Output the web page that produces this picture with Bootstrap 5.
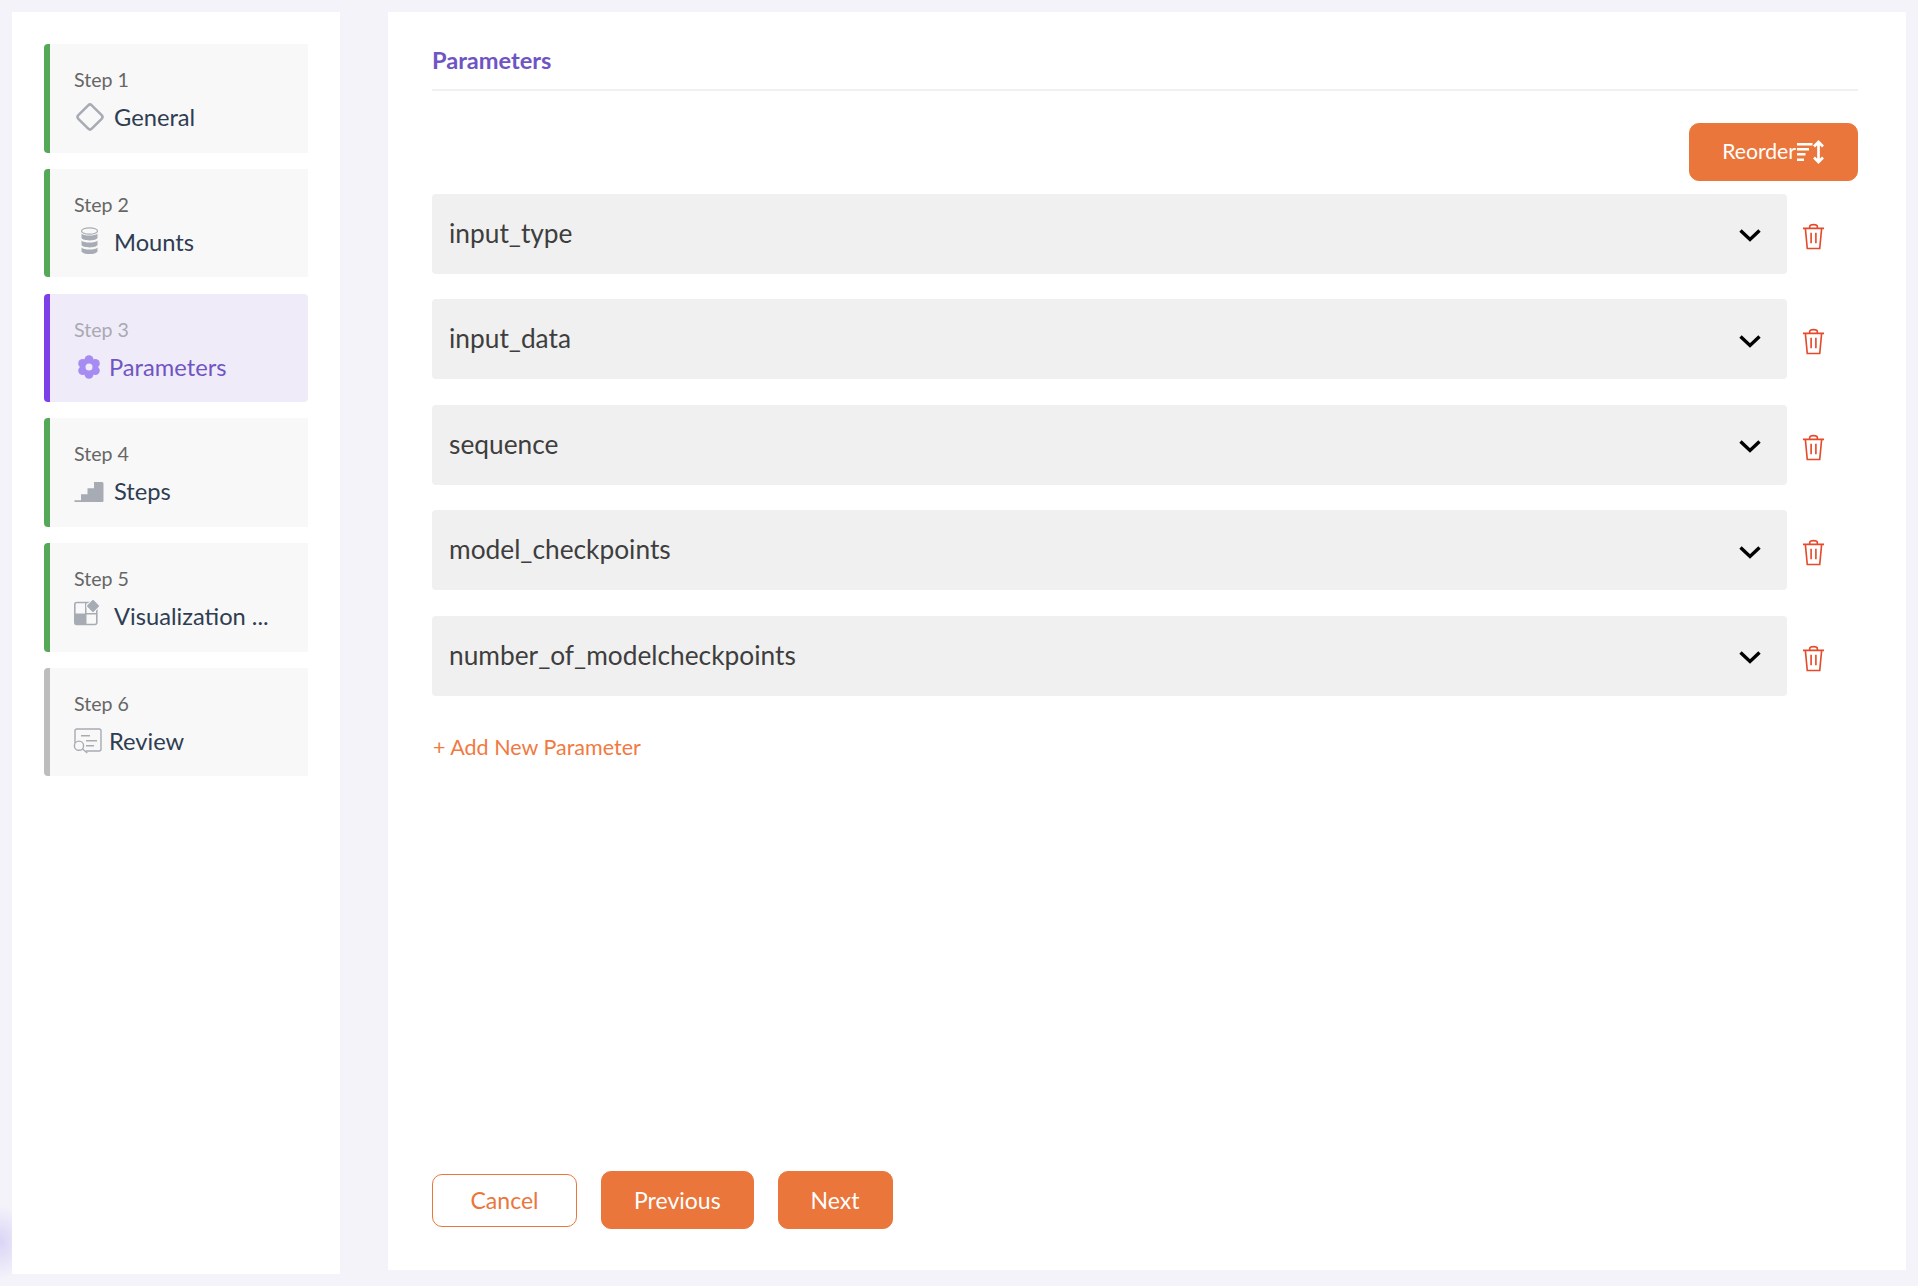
<!doctype html>
<html lang="en">
<head>
<meta charset="utf-8">
<title>Parameters</title>
<link href="https://cdn.jsdelivr.net/npm/bootstrap@5.3.0/dist/css/bootstrap.min.css" rel="stylesheet">
<style>
html,body{height:100%}
body{background:#f4f3fa;font-family:"Lato","Noto Sans",sans-serif;overflow:hidden;padding:12px;position:relative}
.shell{height:1262px;gap:48px;position:relative;z-index:1}
.side-panel{width:328px;background:#fff;padding:32px;flex:none;gap:16.3px}
.step-box{height:108.5px;flex:none;background:#f8f8f8;border-left:6px solid #55a858;border-radius:4px 0 0 4px;padding:21px 0 0 24px}
.step-box.is-active{background:#efebf8;border-left-color:#7c3fe8;border-radius:4px}
.step-box.is-pending{border-left-color:#bdbdbd}
.step-num{font-size:19.6px;line-height:30px;color:#666}
.is-active .step-num{color:#a9a9b3}
.step-name{font-size:23.7px;line-height:34px;color:#2f3d52;margin-top:5px}
.is-active .step-name{color:#6f55c3}
.step-ico{width:30px;height:30px;flex:none;display:block;overflow:visible}
.name-wide{gap:10px}
.name-tight{gap:5px}
.main-panel{width:1518px;height:1258px;background:#fff;padding:32px 48px 41px 44px}
.panel-title{font-size:23.6px;font-weight:700;color:#6f55c3;line-height:32px;border-bottom:2px solid #f0f0f0;height:47px}
.act-btn{--bs-btn-color:#fff;--bs-btn-bg:#ea763b;--bs-btn-border-color:#ea763b;--bs-btn-hover-bg:#ea763b;--bs-btn-hover-color:#fff;--bs-btn-hover-border-color:#ea763b;--bs-btn-border-radius:10px;font-size:23px;height:58px;padding:0 32px;display:inline-flex;align-items:center}
.act-btn.reorder-btn{font-size:21.2px;padding:0 32px}
.reorder-btn svg{margin-left:1px}
.ghost-btn{--bs-btn-color:#ea763b;--bs-btn-bg:#fff;--bs-btn-border-color:#ea763b;--bs-btn-hover-bg:#fff;--bs-btn-hover-color:#ea763b;--bs-btn-hover-border-color:#ea763b;--bs-btn-border-radius:10px;font-size:23px;height:53px;width:145px;display:inline-flex;align-items:center;justify-content:center}
.reorder-wrap{margin-top:32px;height:58px;margin-bottom:12.5px}
.param-row{height:80px;margin-bottom:25.5px}
.param-head{width:1355px;height:80px;background:#f0f0f0;border-radius:4px;padding:0 26px 0 17px;font-size:26.3px;color:#3e3e3e}
.chev-ico{margin-top:3px}
.trash-ico{margin-left:15px;margin-top:5px}
.add-link{font-size:21.5px;color:#f07a42;text-decoration:none;line-height:30px}
.add-wrap{margin-top:10.5px;padding-left:1px}
.foot-actions{gap:24px}
.glow-spot{position:absolute;left:-30px;top:1205px;width:60px;height:74px;pointer-events:none;background:radial-gradient(closest-side,rgba(180,165,240,.4),rgba(180,165,240,0))}
</style>
</head>
<body>
<div class="glow-spot"></div>
<div class="shell d-flex align-items-start">
  <aside class="side-panel d-flex flex-column h-100">
    <div class="step-box">
      <div class="step-num">Step 1</div>
      <div class="step-name d-flex align-items-center name-wide">
        <svg class="step-ico" viewBox="0 0 30 30"><rect x="6.500" y="5.500" width="19" height="19" rx="2.500" transform="rotate(45 16 15)" fill="none" stroke="#a7abb3" stroke-width="2.500"/></svg>
        <span>General</span>
      </div>
    </div>
    <div class="step-box">
      <div class="step-num">Step 2</div>
      <div class="step-name d-flex align-items-center name-wide">
        <svg class="step-ico" viewBox="0 0 30 30"><ellipse cx="15.500" cy="4" rx="8" ry="3.200" fill="#f8f8f8" stroke="#a7abb3" stroke-width="1.200"/><path d="M7.500 6.500c2 2.800 14 2.800 16 0V11c-1.500 3.200-14.500 3.200-16 0zM7.500 13.500c2 2.800 14 2.800 16 0V18c-1.500 3.200-14.500 3.200-16 0zM7.500 20.500c2 2.800 14 2.800 16 0V24.500c-1.500 3.400-14.500 3.400-16 0z" fill="#a7abb3"/></svg>
        <span>Mounts</span>
      </div>
    </div>
    <div class="step-box is-active">
      <div class="step-num">Step 3</div>
      <div class="step-name d-flex align-items-center name-tight">
        <svg class="step-ico" viewBox="0 0 30 30"><g fill="#a68cf2"><circle cx="15" cy="7.800" r="4.500"/><circle cx="15" cy="22.200" r="4.500"/><circle cx="8.700" cy="11.400" r="4.500"/><circle cx="21.300" cy="11.400" r="4.500"/><circle cx="8.700" cy="18.600" r="4.500"/><circle cx="21.300" cy="18.600" r="4.500"/><circle cx="15" cy="15" r="7"/></g><circle cx="15" cy="15" r="3.500" fill="#efebf8"/></svg>
        <span>Parameters</span>
      </div>
    </div>
    <div class="step-box">
      <div class="step-num">Step 4</div>
      <div class="step-name d-flex align-items-center name-wide">
        <svg class="step-ico" viewBox="0 0 30 30"><path d="M.5 26v-1.700H7v-6h6.500v-6H20V6h8a1.500 1.500 0 0 1 1.500 1.500V25a1 1 0 0 1-1 1z" fill="#a7abb3"/></svg>
        <span>Steps</span>
      </div>
    </div>
    <div class="step-box">
      <div class="step-num">Step 5</div>
      <div class="step-name d-flex align-items-center name-wide">
        <svg class="step-ico" viewBox="0 0 30 30"><rect x=".8" y="1.500" width="22" height="22" rx="2" fill="#f8f8f8" stroke="#a7abb3" stroke-width="1.600"/><path d="M1 12.500h10.500V24H3a2 2 0 0 1-2-2zM11 1.500h1.500V24H11zM11 12h12v1.500H11z" fill="#a7abb3"/><rect x="14" y="0" width="10" height="10" rx="1.500" transform="rotate(45 19 5)" fill="#a7abb3" stroke="#f8f8f8" stroke-width="1"/></svg>
        <span>Visualization ...</span>
      </div>
    </div>
    <div class="step-box is-pending">
      <div class="step-num">Step 6</div>
      <div class="step-name d-flex align-items-center name-tight">
        <svg class="step-ico" viewBox="0 0 30 30"><path d="M1 17V5a2 2 0 0 1 2-2h22a2 2 0 0 1 2 2v18a2 2 0 0 1-2 2H12" fill="none" stroke="#a7abb3" stroke-width="1.400"/><path d="M7 9.700h9M12 14.700h11M12 19.700h8" stroke="#a7abb3" stroke-width="1.400" fill="none"/><circle cx="5" cy="19.700" r="4.600" fill="#f8f8f8" stroke="#a7abb3" stroke-width="1.400"/><path d="M8.500 23l4.800 4" stroke="#a7abb3" stroke-width="1.400"/></svg>
        <span>Review</span>
      </div>
    </div>
  </aside>
  <main class="main-panel d-flex flex-column">
    <div class="panel-title">Parameters</div>
    <div class="reorder-wrap d-flex justify-content-end">
      <button class="btn act-btn reorder-btn" type="button">Reorder<svg width="28" height="24" viewBox="0 0 28 24"><path d="M0 3h15.500v2.500H0zM0 8h12v2.500H0zM0 13h8.500v2.500H0zM0 18.500h7V21H0z" fill="#fff"/><path d="M21.500 3v18M17 6.500L21.500 2 26 6.500M17 17.500l4.500 4.500 4.500-4.500" fill="none" stroke="#fff" stroke-width="2.700"/></svg></button>
    </div>
    <div class="param-row d-flex align-items-center">
      <div class="param-head d-flex align-items-center justify-content-between"><span>input_type</span><svg class="chev-ico" width="22" height="14" viewBox="0 0 22 14"><path d="M1.500 2.500L11 11.500l9.500-9" fill="none" stroke="#000" stroke-width="3.400"/></svg></div>
      <svg class="trash-ico" width="23" height="27" viewBox="0 0 24 28"><path d="M1 5.500h22M8 5.500V3.500C8 1 16 1 16 3.500v2M3.500 5.500l2 21h13l2-21M9.500 10v11M14.500 10v11" fill="none" stroke="#e54a2a" stroke-width="1.700"/></svg>
    </div>
    <div class="param-row d-flex align-items-center">
      <div class="param-head d-flex align-items-center justify-content-between"><span>input_data</span><svg class="chev-ico" width="22" height="14" viewBox="0 0 22 14"><path d="M1.500 2.500L11 11.500l9.500-9" fill="none" stroke="#000" stroke-width="3.400"/></svg></div>
      <svg class="trash-ico" width="23" height="27" viewBox="0 0 24 28"><path d="M1 5.500h22M8 5.500V3.500C8 1 16 1 16 3.500v2M3.500 5.500l2 21h13l2-21M9.500 10v11M14.500 10v11" fill="none" stroke="#e54a2a" stroke-width="1.700"/></svg>
    </div>
    <div class="param-row d-flex align-items-center">
      <div class="param-head d-flex align-items-center justify-content-between"><span>sequence</span><svg class="chev-ico" width="22" height="14" viewBox="0 0 22 14"><path d="M1.500 2.500L11 11.500l9.500-9" fill="none" stroke="#000" stroke-width="3.400"/></svg></div>
      <svg class="trash-ico" width="23" height="27" viewBox="0 0 24 28"><path d="M1 5.500h22M8 5.500V3.500C8 1 16 1 16 3.500v2M3.500 5.500l2 21h13l2-21M9.500 10v11M14.500 10v11" fill="none" stroke="#e54a2a" stroke-width="1.700"/></svg>
    </div>
    <div class="param-row d-flex align-items-center">
      <div class="param-head d-flex align-items-center justify-content-between"><span>model_checkpoints</span><svg class="chev-ico" width="22" height="14" viewBox="0 0 22 14"><path d="M1.500 2.500L11 11.500l9.500-9" fill="none" stroke="#000" stroke-width="3.400"/></svg></div>
      <svg class="trash-ico" width="23" height="27" viewBox="0 0 24 28"><path d="M1 5.500h22M8 5.500V3.500C8 1 16 1 16 3.500v2M3.500 5.500l2 21h13l2-21M9.500 10v11M14.500 10v11" fill="none" stroke="#e54a2a" stroke-width="1.700"/></svg>
    </div>
    <div class="param-row d-flex align-items-center">
      <div class="param-head d-flex align-items-center justify-content-between"><span>number_of_modelcheckpoints</span><svg class="chev-ico" width="22" height="14" viewBox="0 0 22 14"><path d="M1.500 2.500L11 11.500l9.500-9" fill="none" stroke="#000" stroke-width="3.400"/></svg></div>
      <svg class="trash-ico" width="23" height="27" viewBox="0 0 24 28"><path d="M1 5.500h22M8 5.500V3.500C8 1 16 1 16 3.500v2M3.500 5.500l2 21h13l2-21M9.500 10v11M14.500 10v11" fill="none" stroke="#e54a2a" stroke-width="1.700"/></svg>
    </div>
    <div class="add-wrap"><a class="add-link" href="#">+ Add New Parameter</a></div>
    <div class="foot-actions d-flex align-items-center mt-auto">
      <button class="btn ghost-btn" type="button">Cancel</button>
      <button class="btn act-btn" type="button">Previous</button>
      <button class="btn act-btn" type="button">Next</button>
    </div>
  </main>
</div>
<script src="https://cdn.jsdelivr.net/npm/bootstrap@5.3.0/dist/js/bootstrap.bundle.min.js"></script>
</body>
</html>
